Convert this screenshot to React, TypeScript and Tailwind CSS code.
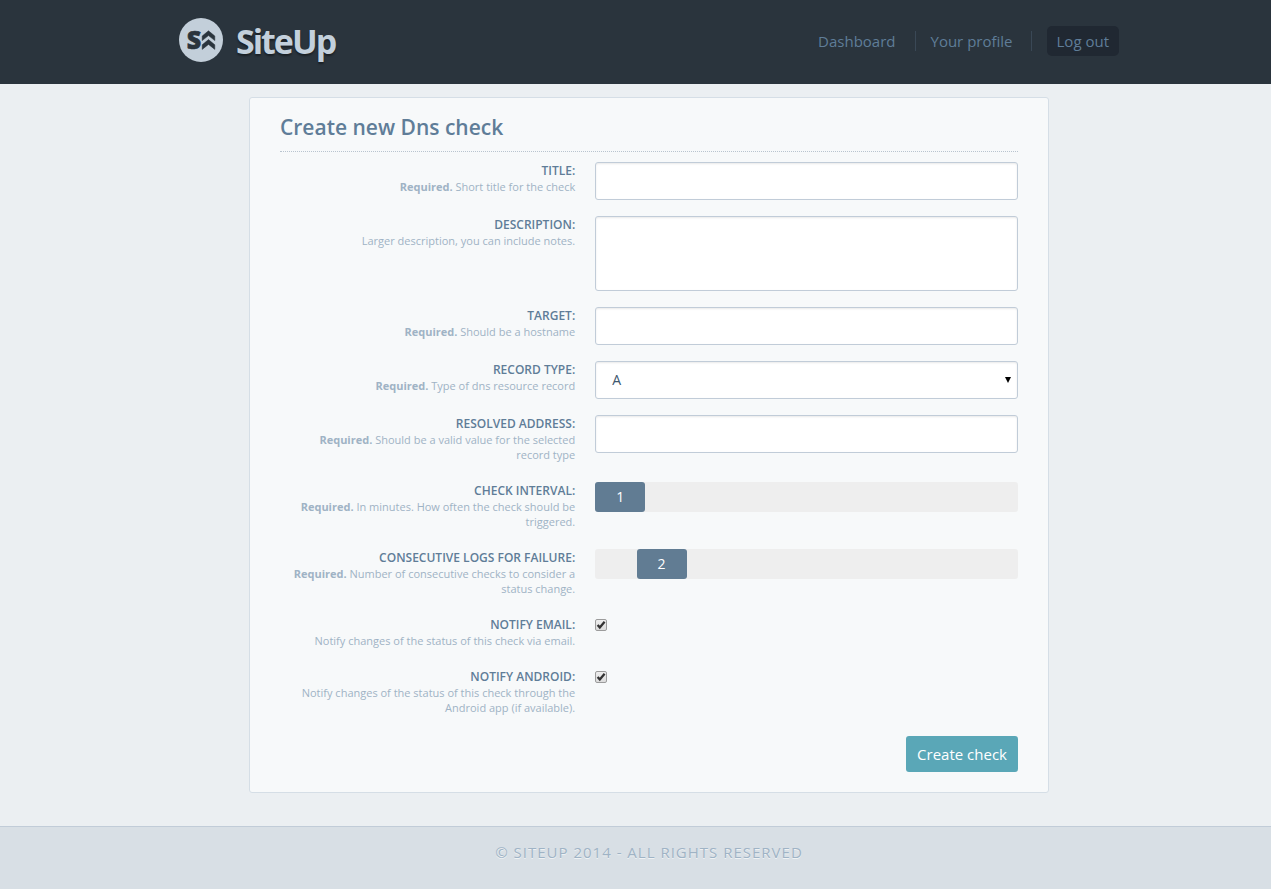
import { useState, type ReactNode } from "react";

const controlClass =
  "block w-full rounded-[3px] border border-[#c1ccd8] bg-white px-4 text-sm text-[#40576e] outline-none shadow-[inset_0_1px_2px_rgba(0,0,0,0.09)]";

function Field({
  id,
  label,
  required = false,
  help,
  children,
}: {
  id: string;
  label: string;
  required?: boolean;
  help: string;
  children: ReactNode;
}) {
  return (
    <div className="mb-4 grid grid-cols-[40%_1fr] gap-x-5">
      <div className="pt-px pb-1 pl-[10px] text-right">
        <label htmlFor={id} className="block text-xs leading-4 font-semibold text-[#5f7d98] uppercase">
          {label}
        </label>
        <p className="text-[11px] leading-[15px] text-[#9fb3c5]">
          {required && <strong>Required. </strong>}
          {help}
        </p>
      </div>
      <div>{children}</div>
    </div>
  );
}

function Slider({ id, initial, max }: { id: string; initial: number; max: number }) {
  const [value, setValue] = useState(initial);
  const ratio = (value - 1) / (max - 1);
  return (
    <div className="relative h-[30px]">
      <input
        id={id}
        type="range"
        min={1}
        max={max}
        value={value}
        onChange={(e) => setValue(Number(e.target.value))}
        className="block h-[30px] w-full appearance-none rounded-[3px] bg-[#eeeeee] [&::-webkit-slider-thumb]:h-[30px] [&::-webkit-slider-thumb]:w-[50px] [&::-webkit-slider-thumb]:appearance-none [&::-webkit-slider-thumb]:rounded-[3px] [&::-webkit-slider-thumb]:bg-[#617c93]"
      />
      <span
        className="pointer-events-none absolute top-0 w-[50px] text-center text-sm leading-[30px] text-white"
        style={{ left: `calc((100% - 50px) * ${ratio})` }}
      >
        {value}
      </span>
    </div>
  );
}

function Tick({ id }: { id: string }) {
  return (
    <span className="relative mt-[3px] block size-3">
      <input
        id={id}
        type="checkbox"
        defaultChecked
        className="peer block size-3 appearance-none rounded-[2px] border border-[#9c9c9c] bg-linear-to-b from-[#eeeeee] to-[#dcdcdc]"
      />
      <svg
        viewBox="0 0 12 12"
        className="pointer-events-none absolute inset-0 size-3 opacity-0 peer-checked:opacity-100"
        aria-hidden="true"
      >
        <path d="M2.6 6 4.8 8.4 9.6 2.8" fill="none" stroke="#333" strokeWidth="2.3" />
      </svg>
    </span>
  );
}

function Logo() {
  return (
    <a href="#" className="flex items-start gap-[13px] text-[#c3d0dc]">
      <svg viewBox="0 0 44 44" className="size-11" aria-hidden="true">
        <circle cx="22" cy="22" r="22" fill="#c3cfda" />
        <text
          x="7.8"
          y="31"
          fontFamily="Open Sans"
          fontWeight="800"
          fontSize="25"
          fill="#2a343d"
          stroke="#2a343d"
          strokeWidth="0.6"
        >
          S
        </text>
        <path
          d="M29.5 12.8 35.8 18V22.6L29.5 17.6 23.2 22.6V18ZM29.5 21.6 35.8 26.8V31.4L29.5 26.4 23.2 31.4V26.8Z"
          fill="#2a343d"
          stroke="#2a343d"
          strokeWidth="0.5"
        />
      </svg>
      <span className="text-[34px] leading-[46px] font-bold tracking-[-2px] [text-shadow:0_2px_2px_rgba(0,0,0,0.4)]">
        SiteUp
      </span>
    </a>
  );
}

export default function App() {
  return (
    <div className="flex min-h-screen flex-col bg-[#ebeff2] font-['Open_Sans',sans-serif]">
      <header className="bg-[#2a343d] pl-[27px]">
        <div className="mx-auto flex h-21 max-w-[940px] items-start justify-between pt-[18px]">
          <Logo />
          <nav className="flex items-center pt-2 text-[15px] leading-5 text-[#5f7d98]">
            <a href="#" className="border-r border-[#3a4856] pr-[19px]">Dashboard</a>
            <a href="#" className="mr-[15px] border-r border-[#3a4856] pr-[18px] pl-[15px]">Your profile</a>
            <a href="#" className="rounded-[5px] bg-[#202832] px-[10px] py-[5px]">Log out</a>
          </nav>
        </div>
      </header>

      <main className="flex-1 pt-[13px] pb-[33px] pl-[27px]">
        <form
          onSubmit={(e) => e.preventDefault()}
          className="mx-auto max-w-[800px] rounded-[3px] border border-[#d5dee6] bg-[#f7f9fa] px-[30px] pt-[14px] pb-5"
        >
          <h1 className="mb-[10px] border-b border-dotted border-[#b9c4cf] pb-[9px] text-[21px] leading-[30px] font-semibold text-[#5f7d98]">
            Create new Dns check
          </h1>
          <Field id="title" label="Title:" required help="Short title for the check">
            <input id="title" type="text" className={`${controlClass} h-[38px]`} />
          </Field>
          <Field id="description" label="Description:" help="Larger description, you can include notes.">
            <textarea id="description" className={`${controlClass} h-[75px] resize-none py-2`} />
          </Field>
          <Field id="target" label="Target:" required help="Should be a hostname">
            <input id="target" type="text" className={`${controlClass} h-[38px]`} />
          </Field>
          <Field id="record" label="Record type:" required help="Type of dns resource record">
            <div className="relative">
              <select id="record" className={`${controlClass} h-[38px] appearance-none`}>
                <option>A</option>
                <option>AAAA</option>
                <option>CNAME</option>
                <option>MX</option>
                <option>TXT</option>
              </select>
              <svg
                viewBox="0 0 6 6"
                className="pointer-events-none absolute top-4 right-[7px] size-[6px]"
                aria-hidden="true"
              >
                <path d="M0 0H6L3 6Z" fill="#000" />
              </svg>
            </div>
          </Field>
          <Field id="address" label="Resolved address:" required help="Should be a valid value for the selected record type">
            <input id="address" type="text" className={`${controlClass} h-[38px]`} />
          </Field>
          <Field id="interval" label="Check interval:" required help="In minutes. How often the check should be triggered.">
            <Slider id="interval" initial={1} max={60} />
          </Field>
          <Field id="logs" label="Consecutive logs for failure:" required help="Number of consecutive checks to consider a status change.">
            <Slider id="logs" initial={2} max={10} />
          </Field>
          <Field id="email" label="Notify email:" help="Notify changes of the status of this check via email.">
            <Tick id="email" />
          </Field>
          <Field id="android" label="Notify android:" help="Notify changes of the status of this check through the Android app (if available).">
            <Tick id="android" />
          </Field>
          <div className="flex justify-end pt-px">
            <button type="submit" className="h-9 rounded-[3px] bg-[#5aa7b7] px-[11px] text-[15px] text-white">
              Create check
            </button>
          </div>
        </form>
      </main>

      <footer className="h-[63px] border-t border-[#c1ccd8] bg-[#d8dfe5] pt-[15px] pl-[27px] text-center text-[15px] leading-5 tracking-[1px] text-[#9fb3c5] uppercase [text-shadow:0_1px_0_rgba(255,255,255,0.6)]">
        © SiteUp 2014 - All rights reserved
      </footer>
    </div>
  );
}
